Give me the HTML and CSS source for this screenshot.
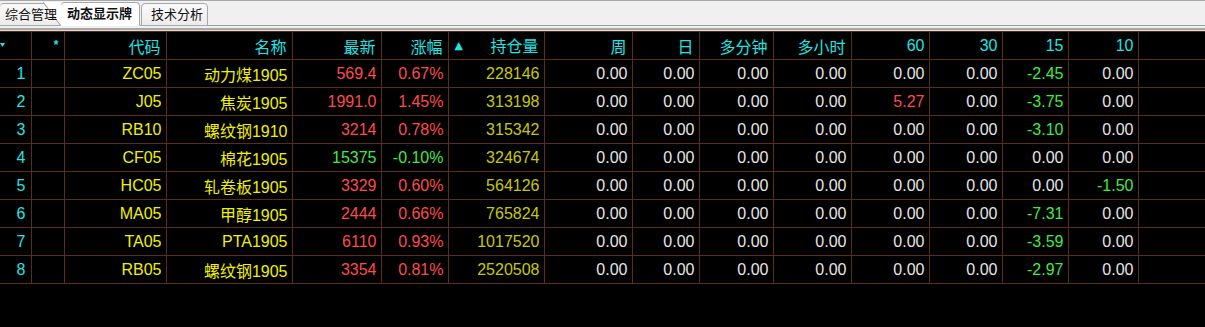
FILE: index.html
```html
<!DOCTYPE html>
<html lang="zh-CN">
<head>
    <meta charset="UTF-8">
    <title>动态显示牌</title>
    <link rel="stylesheet" href="styles.css">
</head>
<body>
    <div class="tabs">
        <div class="tab"><span>综合管理</span></div>
        <div class="tab active"><span>动态显示牌</span></div>
        <div class="tab"><span>技术分析</span></div>
    </div>
    <div class="band"></div>

    <table class="board">
        <colgroup>
            <col style="width:31px"><col style="width:33px"><col style="width:102px"><col style="width:126px">
            <col style="width:89px"><col style="width:67px"><col style="width:96px"><col style="width:88px">
            <col style="width:67px"><col style="width:74px"><col style="width:78px"><col style="width:78px">
            <col style="width:73px"><col style="width:66px"><col style="width:70px"><col>
        </colgroup>
        <thead>
            <tr>
                <th class="menu"><svg width="5" height="4" viewBox="0 0 5 4"><path d="M0 0H5L2.5 4Z" fill="#1fe5e5"/></svg></th>
                <th class="star">*</th>
                <th>代码</th>
                <th>名称</th>
                <th>最新</th>
                <th>涨幅</th>
                <th><span class="sort">▲</span>持仓量</th>
                <th>周</th>
                <th>日</th>
                <th>多分钟</th>
                <th>多小时</th>
                <th class="num">60</th>
                <th class="num">30</th>
                <th class="num">15</th>
                <th class="num">10</th>
                <th class="end"></th>
            </tr>
        </thead>
        <tbody>
            <tr>
                <td class="idx">1</td><td></td><td class="code">ZC05</td><td class="name">动力煤1905</td>
                <td class="up">569.4</td><td class="up">0.67%</td><td class="vol">228146</td>
                <td>0.00</td><td>0.00</td><td>0.00</td><td>0.00</td><td>0.00</td><td>0.00</td><td class="down">-2.45</td><td>0.00</td><td class="end"></td>
            </tr>
            <tr>
                <td class="idx">2</td><td></td><td class="code">J05</td><td class="name">焦炭1905</td>
                <td class="up">1991.0</td><td class="up">1.45%</td><td class="vol">313198</td>
                <td>0.00</td><td>0.00</td><td>0.00</td><td>0.00</td><td class="up">5.27</td><td>0.00</td><td class="down">-3.75</td><td>0.00</td><td class="end"></td>
            </tr>
            <tr>
                <td class="idx">3</td><td></td><td class="code">RB10</td><td class="name">螺纹钢1910</td>
                <td class="up">3214</td><td class="up">0.78%</td><td class="vol">315342</td>
                <td>0.00</td><td>0.00</td><td>0.00</td><td>0.00</td><td>0.00</td><td>0.00</td><td class="down">-3.10</td><td>0.00</td><td class="end"></td>
            </tr>
            <tr>
                <td class="idx">4</td><td></td><td class="code">CF05</td><td class="name">棉花1905</td>
                <td class="down">15375</td><td class="down">-0.10%</td><td class="vol">324674</td>
                <td>0.00</td><td>0.00</td><td>0.00</td><td>0.00</td><td>0.00</td><td>0.00</td><td>0.00</td><td>0.00</td><td class="end"></td>
            </tr>
            <tr>
                <td class="idx">5</td><td></td><td class="code">HC05</td><td class="name">轧卷板1905</td>
                <td class="up">3329</td><td class="up">0.60%</td><td class="vol">564126</td>
                <td>0.00</td><td>0.00</td><td>0.00</td><td>0.00</td><td>0.00</td><td>0.00</td><td>0.00</td><td class="down">-1.50</td><td class="end"></td>
            </tr>
            <tr>
                <td class="idx">6</td><td></td><td class="code">MA05</td><td class="name">甲醇1905</td>
                <td class="up">2444</td><td class="up">0.66%</td><td class="vol">765824</td>
                <td>0.00</td><td>0.00</td><td>0.00</td><td>0.00</td><td>0.00</td><td>0.00</td><td class="down">-7.31</td><td>0.00</td><td class="end"></td>
            </tr>
            <tr>
                <td class="idx">7</td><td></td><td class="code">TA05</td><td class="name">PTA1905</td>
                <td class="up">6110</td><td class="up">0.93%</td><td class="vol">1017520</td>
                <td>0.00</td><td>0.00</td><td>0.00</td><td>0.00</td><td>0.00</td><td>0.00</td><td class="down">-3.59</td><td>0.00</td><td class="end"></td>
            </tr>
            <tr>
                <td class="idx">8</td><td></td><td class="code">RB05</td><td class="name">螺纹钢1905</td>
                <td class="up">3354</td><td class="up">0.81%</td><td class="vol">2520508</td>
                <td>0.00</td><td>0.00</td><td>0.00</td><td>0.00</td><td>0.00</td><td>0.00</td><td class="down">-2.97</td><td>0.00</td><td class="end"></td>
            </tr>
        </tbody>
    </table>
</body>
</html>
```

FILE: styles.css
```css
* {
    margin:0;
    padding:0;
    box-sizing: border-box;
}
html, body {
    background: #000;
    height: 100%;
}
body {
    font-family: Arial, "Liberation Sans", "Noto Sans CJK SC", sans-serif;
    overflow: hidden;
}
.tabs {
    height: 26px;
    background: #f0f0f0;
    border-top: 1px solid #a8a8a8;
    border-bottom: 1px solid #a0a0a0;
    display: flex;
    flex-direction: row;
    align-items: flex-end;
}
.tab {
    height: 23px;
    margin-bottom: -1px;
    border: 1px solid #a8a8a8;
    border-radius: 4px 4px 0 0;
    background: linear-gradient(#fafafa, #ececec);
    font-family: "Noto Sans CJK SC", sans-serif;
    font-size: 13px;
    line-height: 20px;
    color: #111;
    white-space: nowrap;
    padding: 0 0 0 4px;
    position: relative;
}
.tab span {
    position: relative;
    z-index: 3;
}
.tab:first-child {
    width: 62px;
    border-left: none;
    padding-left: 5px;
}
.tab.active {
    height: 24px;
    width: 79px;
    margin-left: -1px;
    background: #fff;
    border-left: none;
    border-bottom: 1px solid #fff;
    font-weight: bold;
    padding-left: 6px;
    z-index: 2;
}
/* slanted left edge of the active tab, lying over the first tab */
.tab.active::before {
    content: "";
    position: absolute;
    left: -18px;
    top: -1px;
    bottom: -1px;
    width: 18px;
    background: linear-gradient(to top right, transparent calc(50% - 1px), #a8a8a8 50%, #fff calc(50% + 1px));
}
.tab:last-child {
    width: 67px;
    margin-left: 1px;
    padding-left: 9px;
}
.band {
    height: 5px;
    background: linear-gradient(#f0f0f0 0, #f0f0f0 2px, #a8a8a8 2px, #a8a8a8 4px, #d8d8d8 4px);
}
.board {
    width: 100%;
    table-layout: fixed;
    border-collapse: collapse;
    border-top: 1px solid #5a2c1c;
    font-size: 16px;
}
.board th,
.board td {
    height: 28px;
    padding: 0 4px 0 0;
    text-align: right;
    border: 1px solid #5a2c1c;
    white-space: nowrap;
    overflow: hidden;
    color: #e6e6e6;
}
.board th:first-child,
.board td:first-child {
    border-left: none;
}
.board th {
    font-weight: normal;
    color: #1fe5e5;
    font-family: "Noto Sans CJK SC", sans-serif;
    font-size: 16px;
    padding-right: 5px;
}
.board th.num {
    font-family: Arial, "Liberation Sans", sans-serif;
    padding-right: 4px;
}
.board th.menu {
    text-align: left;
    vertical-align: middle;
    padding: 0;
}
.board th.menu svg {
    display: block;
    margin-top: -2px;
}
.board th.star {
    font-family: Arial, "Liberation Sans", sans-serif;
    font-size: 12px;
    font-weight: bold;
    vertical-align: top;
    padding-top: 6px;
    padding-right: 5px;
}
.sort {
    float: left;
    font-size: 11px;
    line-height: 26px;
    padding-left: 6px;
    font-family: "DejaVu Sans", sans-serif;
}
.board .end {
    border-right: none;
}
.board td.idx {
    color: #1fe5e5;
    padding-right: 5px;
}
.board td.code,
.board td.name {
    color: #f0f000;
}
.board td.vol {
    color: #c8c800;
}
.board td.up {
    color: #ff4a4a;
}
.board td.down {
    color: #44e844;
}
```
